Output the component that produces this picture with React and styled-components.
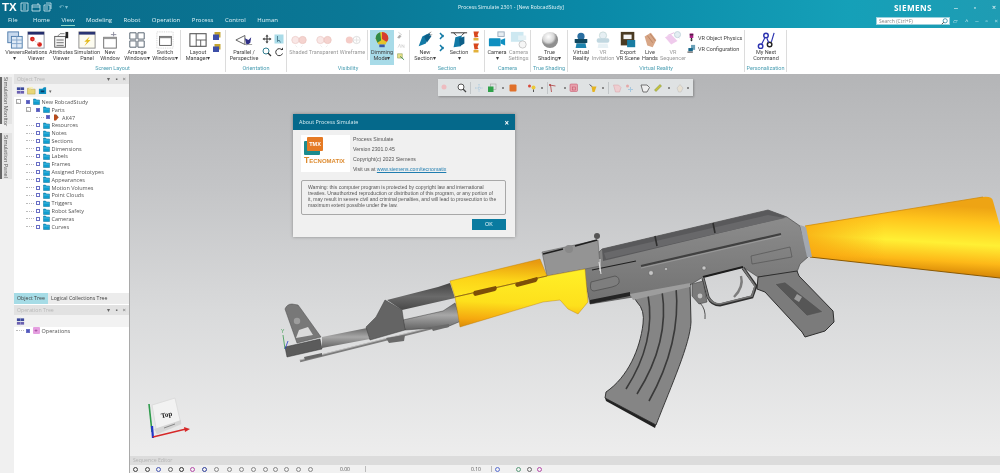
import React from "react";
import styled, { createGlobalStyle } from "styled-components";

const GlobalStyle = createGlobalStyle`
  html, body { margin: 0; padding: 0; background: #fff; }
  body { font-family: "Open Sans", "Liberation Sans", sans-serif; }
`;

const TABS = ["File", "Home", "View", "Modeling", "Robot", "Operation", "Process", "Control", "Human"];

const TREE = ["Resources", "Notes", "Sections", "Dimensions", "Labels", "Frames", "Assigned Prototypes", "Appearances", "Motion Volumes", "Point Clouds", "Triggers", "Robot Safety", "Cameras", "Curves"];

// little pictures used by the ribbon, all on a 20x20 grid
const glyphs = {
  viewers: <><rect x="2" y="1" width="12" height="12" fill="#c7d9ee" stroke="#4a78a8" /><rect x="6" y="6" width="12" height="13" fill="#dfeaf6" stroke="#4a78a8" /><path d="M6 10h12M6 14h12M12 6v13" stroke="#7fa3c8" /></>,
  relations: <><rect x="1" y="1" width="18" height="18" fill="#fff" stroke="#8b8f9c" /><rect x="1" y="1" width="18" height="3" fill="#232c6b" /><circle cx="6" cy="9" r="2.6" fill="#d9251d" /><circle cx="14" cy="15" r="2.6" fill="#d9251d" /><path d="M6 9l8 6" stroke="#d9a0a0" strokeDasharray="1 1" /></>,
  attributes: <><rect x="3" y="6" width="12" height="12" fill="#f4f4f4" stroke="#555" /><path d="M5 10h8M5 13h8M5 16h8" stroke="#666" /><path d="M6 6l3-3h5" fill="none" stroke="#777" /><rect x="15" y="1" width="3" height="7" fill="#222" /></>,
  simulation: <><rect x="1" y="1" width="18" height="18" fill="#fdfcf0" stroke="#888" /><rect x="1" y="1" width="18" height="3" fill="#2b3573" /><path d="M13 6l-6 6h3l-3 5 7-7h-3z" fill="#e4bb1e" /></>,
  newWindow: <><rect x="3" y="7" width="14" height="12" fill="#fff" stroke="#666" /><rect x="3" y="7" width="14" height="2" fill="#999" /><path d="M14 1v5M11 4h6" stroke="#889" /></>,
  arrange: <><path d="M2 2h7v7H2zM11 2h7v7h-7zM2 11h7v7H2zM11 11h7v7h-7z" fill="#fff" stroke="#5a6672" strokeWidth="1.1" /></>,
  switchWin: <><rect x="1" y="1" width="18" height="18" fill="none" stroke="#ccc" strokeDasharray="1 1" /><rect x="4" y="6" width="13" height="10" fill="#fff" stroke="#555" /><rect x="4" y="6" width="13" height="2" fill="#888" /></>,
  layout: <><rect x="1" y="3" width="18" height="14" fill="#fff" stroke="#555" strokeWidth="1.2" /><path d="M8 3v14M8 10h11M13 10v7" stroke="#555" /></>,
  parallel: <><path d="M1 10l10-5v10z" fill="#fff" stroke="#555" /><path d="M11 8l4 2 3-3-1 6-4 3z" fill="#2f2f86" /><path d="M11 15l8 0" stroke="#999" /></>,
  ball: <><circle cx="6" cy="10" r="4" fill="#f5d5d2" stroke="#e0a9a4" /><circle cx="14" cy="10" r="4" fill="#eeb0a8" stroke="#dc9a90" /><path d="M6 16l2 2M14 16l-2 2" stroke="#ddd" /></>,
  wire: <><circle cx="6" cy="10" r="4" fill="#eda49b" /><circle cx="14" cy="10" r="4" fill="#fff" stroke="#bbb" /><path d="M11 10h6M14 7v6" stroke="#ccc" /></>,
  dimming: <><path d="M10 1a7 7 0 0 1 7 7c0 3-2 4-3 7H6c-1-3-3-4-3-7a7 7 0 0 1 7-7z" fill="#e5c42a" /><path d="M10 1a7 7 0 0 1 7 7c0 2-1 3-2 4l-5-3z" fill="#d63c31" /><path d="M3 8a7 7 0 0 1 5-6.7l1 9L5 13z" fill="#2f8a46" /><rect x="7" y="15" width="6" height="3" fill="#3857a8" /></>,
  section: <><path d="M3 17l4-11 6-3-2 11z" fill="#127aa6" /><path d="M9 6l6-4 2 4-5 7z" fill="#0d5f88" /><path d="M14 3l3-2M15 5l3-1" stroke="#999" /></>,
  sectionB: <><path d="M4 18l2-11 7-2-1 12z" fill="#127aa6" /><path d="M10 8l6-2 0 8-5 3z" fill="#0d5f88" /><path d="M1 2h18M4 2l3 3M16 2l-3 3" stroke="#222" /></>,
  camera: <><rect x="1" y="8" width="13" height="9" rx="1" fill="#0f8fc0" /><path d="M14 10l5-2v8l-5-2z" fill="#0f8fc0" /><rect x="11" y="1" width="7" height="5" fill="#e8eef2" stroke="#9ab" /></>,
  cameraSet: <><rect x="1" y="1" width="14" height="11" fill="#a5d6e6" /><rect x="9" y="5" width="9" height="5" fill="#cfe6ee" /><circle cx="14" cy="15" r="4" fill="#f0f0f0" stroke="#999" /></>,
  sphere: <><defs><radialGradient id="sph" cx="40%" cy="30%"><stop offset="0" stopColor="#fff" /><stop offset="0.7" stopColor="#d6d6d6" /><stop offset="1" stopColor="#8f8f8f" /></radialGradient></defs><circle cx="10" cy="10" r="9" fill="url(#sph)" /></>,
  vr: <><circle cx="10" cy="6" r="4" fill="#2a6ea0" /><path d="M3 9h14v4l-3 1H6l-3-1z" fill="#10475f" /><path d="M5 14h10l1 5H4z" fill="#1c83ad" /></>,
  vrInvite: <><circle cx="10" cy="5" r="4" fill="#d3e3ea" stroke="#9bb" /><rect x="3" y="8" width="14" height="5" rx="2" fill="#8fb8c8" /><path d="M5 14h10l1 5H4z" fill="#d5e6ee" /></>,
  exportVr: <><rect x="2" y="1" width="15" height="15" fill="#4a3a22" /><rect x="5" y="4" width="9" height="5" fill="#f3f3f3" /><rect x="9" y="10" width="9" height="8" fill="#1a7da2" /></>,
  hands: <><path d="M4 6l7-4 6 8-4 8-6-2z" fill="#d8a686" /><path d="M7 5l6 8M10 3l6 8" stroke="#b98463" fill="none" /></>,
  sequencer: <><path d="M1 7l7-3 7 7-7 4z" fill="#e3a0dd" /><path d="M4 5l7-3 6 6" stroke="#cf7ec7" fill="none" /><circle cx="15" cy="4" r="3.4" fill="#cfe0e8" stroke="#8fb1c0" /></>,
  next: <><circle cx="4" cy="17" r="2.5" fill="none" stroke="#2c33b0" strokeWidth="1.6" /><circle cx="10" cy="5" r="2.5" fill="none" stroke="#2c33b0" strokeWidth="1.6" /><circle cx="14" cy="15" r="2.5" fill="none" stroke="#222" strokeWidth="1.6" /><path d="M5 15l4-8M11 8l2 5M16 12l3-10" stroke="#2c33b0" strokeWidth="1.3" fill="none" /></>,
  cubeBlue: <><rect x="5" y="2" width="12" height="11" fill="#c4a532" /><rect x="2" y="7" width="12" height="11" fill="#3d4fa8" /></>,
  move: <><path d="M10 1l3 4h-2v4h4V7l4 3-4 3v-2h-4v4h2l-3 4-3-4h2v-4H5v2l-4-3 4-3v2h4V5H7z" fill="#333" /></>,
  pick: <><rect x="1" y="1" width="18" height="18" fill="#a9dbe8" /><path d="M7 4v11l3-3 3 5" fill="none" stroke="#2c5b70" strokeWidth="1.4" /></>,
  zoom: <><circle cx="8" cy="8" r="6" fill="none" stroke="#2f7d90" strokeWidth="2" /><path d="M12 12l6 6" stroke="#333" strokeWidth="2.4" /></>,
  rotate: <><path d="M16 6a7 7 0 1 0 1 7" fill="none" stroke="#333" strokeWidth="2" /><path d="M13 6h5V1z" fill="#333" /></>,
  pen: <><path d="M4 3l8 6M2 15l5-6 3 3-4 5z" fill="#aaa" stroke="#999" /></>,
  text: <><path d="M3 13l4-8 2 8M12 13V6l5 7V6" fill="none" stroke="#b5b5b5" /></>,
  mini: <><path d="M2 4h11v10H2z" fill="#e8e08c" stroke="#6f8a36" /><path d="M8 10l9 8" stroke="#3c8a52" strokeWidth="2" /></>,
  stackSmall: <><path d="M4 4l7 8M4 16l7-8" stroke="#127aa6" strokeWidth="3" /></>,
  flag: <><path d="M5 1h11l-3 7 2 4-8 1z" fill="#d8471d" /><path d="M5 14h10v5H5z" fill="#e3b13a" /></>,
  physics: <><rect x="6" y="1" width="8" height="10" fill="#ab1f87" /><rect x="6" y="3" width="8" height="2" fill="#222" /><path d="M10 11v4" stroke="#222" strokeWidth="3" /><path d="M7 15h6l-3 4z" fill="#222" /></>,
  config: <><rect x="9" y="2" width="9" height="11" fill="#6ba1b8" /><rect x="3" y="9" width="10" height="7" fill="#18678b" /><path d="M1 18h12" stroke="#222" strokeWidth="2" /></>,
  treeTool: <><rect x="2" y="3" width="16" height="6" fill="#3d4a9c" /><rect x="2" y="11" width="16" height="6" fill="#6a5fb0" /><path d="M10 1v18" stroke="#c5cbe8" /></>,
  folderOpen: <><path d="M1 5h7l2 2h8v11H1z" fill="#e8d678" stroke="#a99a3a" /><path d="M4 2h9v4H4z" fill="#f7f0b8" /></>,
  boxTool: <><path d="M2 6h8l3-3h5v15H2z" fill="#0f8fc0" /><path d="M6 10h8v4H6z" fill="#083f66" /></>,
};

const Icon = ({ name, size = 18 }) => (
  <svg width={size} height={size} viewBox="0 0 20 20">{glyphs[name]}</svg>
);

const RIBBON = [
  { title: "Screen Layout", width: 226, pad: 4, items: [
    { icon: "viewers", label: "Viewers\n▾", w: 22 },
    { icon: "relations", label: "Relations\nViewer", w: 20 },
    { icon: "attributes", label: "Attributes\nViewer", w: 30 },
    { icon: "simulation", label: "Simulation\nPanel", w: 22 },
    { icon: "newWindow", label: "New\nWindow", w: 20, ml: 2 },
    { icon: "arrange", label: "Arrange\nWindows▾", w: 22, ml: 6 },
    { icon: "switchWin", label: "Switch\nWindows▾", w: 26, ml: 4 },
    { divider: true, ml: 2 },
    { icon: "layout", label: "Layout\nManager▾", w: 26, ml: 4 },
    { stack: ["cubeBlue", "cubeBlue"], w: 12 },
  ] },
  { title: "Orientation", width: 61, items: [
    { icon: "parallel", label: "Parallel /\nPerspective", w: 36 },
    { grid: ["move", "pick", "zoom", "rotate"], w: 24 },
  ] },
  { title: "Visibility", width: 123, items: [
    { icon: "ball", label: "Shaded", w: 23, muted: true },
    { icon: "ball", label: "Transparent", w: 27, muted: true },
    { icon: "wire", label: "Wireframe", w: 29, ml: 1, muted: true },
    { divider: true },
    { icon: "dimming", label: "Dimming\nMode▾", w: 24, ml: 2, active: true },
    { stack: ["pen", "text", "mini"], w: 12, ml: 1 },
  ] },
  { title: "Section", width: 75, pad: 2, items: [
    { icon: "section", label: "New\nSection▾", w: 26 },
    { stack: ["stackSmall", "stackSmall"], w: 10 },
    { icon: "sectionB", label: "Section\n▾", w: 22 },
    { stack: ["flag", "flag"], w: 12 },
  ] },
  { title: "Camera", width: 46, pad: 1, items: [
    { icon: "camera", label: "Camera\n▾", w: 22 },
    { icon: "cameraSet", label: "Camera\nSettings", w: 21, muted: true },
  ] },
  { title: "True Shading", width: 37, items: [
    { icon: "sphere", label: "True\nShading▾", w: 37 },
  ] },
  { title: "Virtual Reality", width: 177, pad: 2, items: [
    { icon: "vr", label: "Virtual\nReality", w: 22 },
    { icon: "vrInvite", label: "VR\nInvitation", w: 22, muted: true },
    { icon: "exportVr", label: "Export\nVR Scene", w: 24, ml: 2 },
    { icon: "hands", label: "Live\nHands", w: 18, ml: 1 },
    { icon: "sequencer", label: "VR\nSequencer", w: 26, ml: 1, muted: true },
    { list: [["physics", "VR Object Physics"], ["config", "VR Configuration"]], ml: 1 },
  ] },
  { title: "Personalization", width: 42, items: [
    { icon: "next", label: "My Next\nCommand", w: 42 },
  ] },
];

// x is the centre of the item on the page
const TOOLS = [
  { x: 445, shape: <circle cx="8" cy="8" r="5" fill="#eebcc0" /> },
  { x: 462, shape: <><circle cx="8" cy="8" r="6" fill="#fff" stroke="#555" strokeWidth="2" /><path d="M12 12l6 6" stroke="#444" strokeWidth="2.5" /></> },
  { x: 470, kind: "sep" },
  { x: 479, shape: <path d="M10 2v16M2 10h16" stroke="#a8c8de" strokeWidth="2" strokeDasharray="3 2" /> },
  { x: 492, shape: <><rect x="7" y="2" width="11" height="11" fill="none" stroke="#999" /><rect x="2" y="7" width="11" height="11" fill="#2fa24a" /></> },
  { x: 503, kind: "dot" },
  { x: 513, shape: <rect x="3" y="3" width="14" height="14" rx="2" fill="#e0702a" /> },
  { x: 532, shape: <><circle cx="5" cy="6" r="3" fill="#d8483a" /><circle cx="13" cy="9" r="4" fill="#ecc93a" /><path d="M13 13v5" stroke="#555" strokeWidth="2" /></> },
  { x: 542, kind: "dot" },
  { x: 547, kind: "sep" },
  { x: 553, shape: <><path d="M3 4l12 2M5 4l2 14" stroke="#b04040" strokeWidth="1.6" /><circle cx="4" cy="4" r="2" fill="#b04040" /></> },
  { x: 565, kind: "dot" },
  { x: 574, shape: <><rect x="2" y="2" width="15" height="15" rx="2" fill="#e7a0ac" stroke="#c04b61" /><rect x="7" y="8" width="6" height="6" fill="none" stroke="#c04b61" /></> },
  { x: 593, shape: <><path d="M3 3l6 5" stroke="#556" strokeWidth="2" /><path d="M7 7h10l-4 11H9z" fill="#e6b420" /></> },
  { x: 603, kind: "dot" },
  { x: 608, kind: "sep" },
  { x: 617, shape: <path d="M3 4h10l5 5-3 9H7z" fill="#eecdd0" stroke="#d8a0a6" /> },
  { x: 630, shape: <><circle cx="5" cy="6" r="3" fill="#e5a8a8" /><path d="M11 8v10M6 13h10" stroke="#a8c8de" strokeWidth="2" /></> },
  { x: 645, shape: <path d="M2 4h12l5 5-5 9H6z" fill="#eee" stroke="#555" strokeWidth="1.6" /> },
  { x: 658, shape: <path d="M3 14L14 3l3 3L6 17z" fill="#c9c23a" stroke="#6f8a36" /> },
  { x: 669, kind: "dot" },
  { x: 680, shape: <path d="M4 10l6-7 6 7-4 8H7z" fill="#e7e0d2" stroke="#bbb" /> },
  { x: 688, kind: "dot" },
];

const SEQ_TOOLS = [
  [135, "#444"], [147, "#444"], [158, "#4757b0"], [170, "#666"], [181, "#333"], [192, "#b44ca8"], [204, "#2f3f9a"],
  [216, "#888"], [229, "#888"], [241, "#888"], [253, "#888"], [265, "#888"], [275, "#888"], [286, "#888"], [298, "#888"], [310, "#888"],
];

const SEQ_TAIL = [["#5a6fd0", 3], ["#5a9a7a", 16], ["#666", 6], ["#b44ca8", 5]];

const toolWidth = (t) => (t.kind === "sep" ? 1 : t.kind === "dot" ? 2 : 10);

function FloatTools() {
  let right = 438;
  return TOOLS.map((t) => {
    const w = toolWidth(t);
    const dx = t.x - w / 2 - right;
    right = t.x + w / 2;
    if (t.kind === "sep") return <FloatSep key={t.x} $dx={dx} />;
    if (t.kind === "dot") return <FloatDot key={t.x} $dx={dx} />;
    return (
      <FloatSlot key={t.x} $dx={dx}>
        <svg width="10" height="10" viewBox="0 0 20 20">{t.shape}</svg>
      </FloatSlot>
    );
  });
}

function RibbonGroup({ group }) {
  return (
    <Group $w={group.width}>
      <GroupBody $pad={group.pad}>
        {group.items.map((it, i) => {
          if (it.divider) return <GroupDivider key={i} $ml={it.ml} />;
          if (it.stack)
            return (
              <SmallStack key={i} $w={it.w} $ml={it.ml}>
                {it.stack.map((n, j) => <Icon key={j} name={n} size={10} />)}
              </SmallStack>
            );
          if (it.grid)
            return (
              <SmallGrid key={i} $w={it.w}>
                {it.grid.map((n, j) => <Icon key={j} name={n} size={10} />)}
              </SmallGrid>
            );
          if (it.list)
            return (
              <SmallList key={i} $ml={it.ml}>
                {it.list.map(([n, t]) => (
                  <SmallRow key={t}><Icon name={n} size={9} />{t}</SmallRow>
                ))}
              </SmallList>
            );
          return (
            <BigButton key={i} $w={it.w} $ml={it.ml} $active={it.active} $muted={it.muted}>
              <Icon name={it.icon} />
              <BigLabel>{it.label}</BigLabel>
            </BigButton>
          );
        })}
      </GroupBody>
      <GroupTitle>{group.title}</GroupTitle>
    </Group>
  );
}

const Folder = () => (
  <svg width="7" height="7" viewBox="0 0 14 14">
    <path d="M1 2h4l2 2h6v9H1z" fill="#0f9fd0" stroke="#0a6f94" />
    <path d="M1 6h12" stroke="#7fd2ec" />
  </svg>
);

const PartMark = () => (
  <svg width="7" height="7" viewBox="0 0 14 14"><path d="M2 1h4l5 6-5 6H2z" fill="#b84b1c" /><path d="M6 1l5 6" stroke="#5a2a10" /></svg>
);

function TreeRow({ indent, expander, filled, icon, label }) {
  return (
    <Row $indent={indent}>
      {expander ? <Expander>-</Expander> : <Stub />}
      <Check $filled={filled} />
      {icon}
      <span>{label}</span>
    </Row>
  );
}

function PanelHead({ title }) {
  return (
    <PanelTitle>
      <span>{title}</span>
      <PanelButtons><span>▾</span><span>▪</span><span>×</span></PanelButtons>
    </PanelTitle>
  );
}

function Rifle() {
  return (
    <RifleSvg viewBox="130 75 870 381" width="870" height="381">
      <defs>
        <linearGradient id="stock" gradientUnits="userSpaceOnUse" x1="906" y1="204" x2="902" y2="272">
          <stop offset="0" stopColor="#eea414" />
          <stop offset="0.22" stopColor="#ffc41c" />
          <stop offset="0.55" stopColor="#fff034" />
          <stop offset="0.82" stopColor="#fdb818" />
          <stop offset="1" stopColor="#d98a08" />
        </linearGradient>
        <linearGradient id="stockFade" gradientUnits="userSpaceOnUse" x1="805" y1="0" x2="885" y2="0">
          <stop offset="0" stopColor="#f7a30e" stopOpacity="0.75" />
          <stop offset="1" stopColor="#f7a30e" stopOpacity="0" />
        </linearGradient>
        <linearGradient id="guardTop" x1="0.1" y1="0" x2="0" y2="1">
          <stop offset="0" stopColor="#e89a10" />
          <stop offset="0.5" stopColor="#fcd418" />
          <stop offset="1" stopColor="#ffe820" />
        </linearGradient>
        <linearGradient id="guardLow" x1="0.1" y1="0" x2="0" y2="1">
          <stop offset="0" stopColor="#ffee26" />
          <stop offset="0.55" stopColor="#fde01c" />
          <stop offset="0.85" stopColor="#f5a80f" />
          <stop offset="1" stopColor="#d88a08" />
        </linearGradient>
        <linearGradient id="metal" x1="0" y1="0" x2="0" y2="1">
          <stop offset="0" stopColor="#8e8e8e" />
          <stop offset="0.5" stopColor="#808080" />
          <stop offset="1" stopColor="#727272" />
        </linearGradient>
        <linearGradient id="tube" x1="0" y1="0" x2="0" y2="1">
          <stop offset="0" stopColor="#444" />
          <stop offset="0.5" stopColor="#6a6a6a" />
          <stop offset="1" stopColor="#484848" />
        </linearGradient>
        <linearGradient id="barrel" x1="0" y1="0" x2="0" y2="1">
          <stop offset="0" stopColor="#6a6a6a" />
          <stop offset="0.45" stopColor="#a8a8a8" />
          <stop offset="1" stopColor="#626262" />
        </linearGradient>
      </defs>

      {/* cleaning rod */}
      <path d="M300 362L452 324" stroke="#7c7c7c" strokeWidth="2.4" />
      <path d="M300 361L452 323" stroke="#d6d6d6" strokeWidth="0.7" />

      {/* barrel, gas tube */}
      <path d="M322 338L367 329L370 340L322 349Z" fill="url(#barrel)" />
      <path d="M403 321L443 312L455 304L461 322L447 328L405 331Z" fill="url(#barrel)" stroke="#3c3c3c" strokeWidth="0.5" />
      <path d="M387 301L438 288L450 284L455 299L402 311Z" fill="url(#tube)" />
      <path d="M366 328L376 318L385 301L402 311L405 331L370 341Z" fill="#646464" stroke="#3d3d3d" strokeWidth="0.5" />
      <path d="M386 339L405 336L404 342L389 344Z" fill="#6a6a6a" />
      <path d="M431 328L449 325L449 328L433 332Z" fill="#6a6a6a" />

      {/* front sight and muzzle */}
      <path d="M285 310Q287 305 292 305L298 306L301 310L321 338L297 344Z" fill="#787878" stroke="#4a4a4a" strokeWidth="0.5" />
      <path d="M296 339L299 331L308 328L313 336Z" fill="#dadada" />
      <circle cx="297" cy="322" r="3.2" fill="#9d9d9d" />
      <path d="M285 348L320 340L322 350L287 358Z" fill="#5b5b5b" stroke="#333" strokeWidth="0.5" />
      <path d="M304 358L322 354L322 357L305 361Z" fill="#666" />

      {/* receiver body */}
      <path d="M583 270L602 250L768 211L787 218L800 227L805 243L808 258L800 265L797 273L758 278L743 268L703 278L690 286L633 298L590 305Z" fill="url(#metal)" stroke="#3c3c3c" strokeWidth="0.6" />
      <path d="M602 250L768 211L787 218L603 262Z" fill="#59595b" />
      <path d="M604 254L768 216L785 219L606 260Z" fill="#68686a" />
      <path d="M655 237L657 247M713 224L715 234" stroke="#2e2e2e" strokeWidth="1.6" />
      <path d="M641 267L781 235" stroke="#404040" strokeWidth="2.2" />
      <path d="M641 269L781 237" stroke="#aaa" strokeWidth="0.6" />
      <path d="M590 305L630 297L630 293L590 301Z" fill="#242424" />
      <path d="M591 283L615 277Q620 278 619 284Q617 287 612 288L594 292Q589 292 591 283Z" fill="#7e7e7e" stroke="#595959" />
      <path d="M592 271L636 262" stroke="#1f1f1f" strokeWidth="1.2" />
      <path d="M751 257L790 248L792 258L752 265Z" fill="none" stroke="#4e4e4e" strokeWidth="0.6" />
      <circle cx="651" cy="274" r="2.4" fill="#c6c6c6" stroke="#555" strokeWidth="0.5" />
      <circle cx="666" cy="270" r="1.6" fill="#bbb" stroke="#555" strokeWidth="0.4" />
      <circle cx="704" cy="269" r="2" fill="#c6c6c6" stroke="#555" strokeWidth="0.4" />
      <path d="M703 278L743 268" stroke="#1d1d1d" strokeWidth="2.2" />

      {/* trigger guard and trigger */}
      <path d="M703 279L708 298Q712 306 720 306L752 298L756 287L743 269" fill="none" stroke="#2f2f2f" strokeWidth="3" />
      <path d="M703 279L708 298Q712 305 720 305L752 297L755 287L743 269" fill="none" stroke="#757575" strokeWidth="1.6" />
      <path d="M741 277Q744 288 734 298" fill="none" stroke="#7d7d7d" strokeWidth="2.4" />

      {/* pistol grip */}
      <path d="M758 278L797 272L799 277L833 312L834 323L825 332L805 338L802 333L765 293L757 290Z" fill="#7b7b7b" stroke="#2e2e2e" strokeWidth="1" />
      <path d="M775 285L785 283L823 313L807 317Z" fill="#565656" stroke="#8a8a8a" strokeWidth="0.5" />
      <path d="M797 295L802 298L799 303L794 300Z" fill="#9a9a9a" />

      {/* magazine catch */}
      <path d="M692 285L703 282L707 303L699 305L692 297Z" fill="#7a7a7a" stroke="#333" strokeWidth="0.5" />
      <circle cx="700" cy="297" r="2.4" fill="#c2c2c2" />
      <path d="M700 304Q706 310 705 320" fill="none" stroke="#444" strokeWidth="0.9" />

      {/* magazine */}
      <path d="M633 297L690 285L691 323C690 345 672 385 656 426L605 399L606 393C628 378 640 350 643 325Q645 311 637 303Z" fill="#858585" stroke="#2a2a2a" strokeWidth="0.9" />
      <path d="M605 399L656 426L655 429L606 402Z" fill="#222" />
      <path d="M648 296C654 330 644 362 626 390" fill="none" stroke="#3a3a3a" strokeWidth="1.6" />
      <path d="M662 292C668 330 656 365 637 395" fill="none" stroke="#3a3a3a" strokeWidth="1.6" />
      <path d="M676 288C680 330 668 368 649 402" fill="none" stroke="#3a3a3a" strokeWidth="1.6" />
      <path d="M630 295L690 284L690 288L633 301Z" fill="#9d9d9d" />

      {/* rear sight */}
      <path d="M542 253L598 241L600 267L585 270L547 277Z" fill="#949494" stroke="#555" strokeWidth="0.5" />
      <path d="M543 255L563 250M575 247L597 241" stroke="#1f1f1f" strokeWidth="1.8" />
      <circle cx="569" cy="250" r="4" fill="#888" />
      <circle cx="597" cy="237" r="3" fill="#555" />
      <path d="M600 260L600 272M599 263L601 275" stroke="#e5e5e5" strokeWidth="1" />

      {/* handguard */}
      <path d="M450 282L540 260L547 277L455 298Z" fill="url(#guardTop)" stroke="#b77808" strokeWidth="0.4" />
      <path d="M455 298L547 277L585 270L588 303L578 315L568 310L560 301L543 303L460 328Z" fill="url(#guardLow)" stroke="#b77808" strokeWidth="0.4" />
      <path d="M455 298L547 277" stroke="#7a5510" strokeWidth="0.7" />
      <path d="M474 292L496 287Q498 290 495 292L475 297Q472 295 474 292Z" fill="#7d4e08" />
      <path d="M516 284L537 278Q539 280 536 283L517 288Q514 286 516 284Z" fill="#7d4e08" />

      {/* stock */}
      <path d="M805 227L860 218L983 198Q992 197 993 202L1000 227L1000 279L810 258Z" fill="url(#stock)" />
      <path d="M805 227L860 218L983 198Q992 197 993 202L1000 227L1000 279L810 258Z" fill="url(#stockFade)" />
      <path d="M805 227L860 218L983 198" fill="none" stroke="#d08a0a" strokeWidth="0.8" />
      <path d="M810 258L1000 279" fill="none" stroke="#8a5a05" strokeWidth="1" />
      <path d="M800 226L806 228L812 258L807 258Z" fill="#a3a8b0" />
    </RifleSvg>
  );
}

function ViewCube() {
  return (
    <CubeSvg viewBox="0 0 50 48" width="50" height="48">
      <path d="M12 9L35 2L41 28L17 38Z" fill="#f2f2f2" stroke="#ddd" />
      <path d="M14 33L41 24L41 28L17 38Z" fill="#d5d5d5" />
      <path d="M24 32L35 28" stroke="#888" strokeWidth="1" />
      <path d="M12 36L9 8" stroke="#2e9b4c" strokeWidth="1.6" />
      <path d="M13 42L12 30" stroke="#2436c8" strokeWidth="2.2" />
      <path d="M13 41L46 33" stroke="#d62828" strokeWidth="1.4" />
      <path d="M50 33L44 31L45 36Z" fill="#d62828" />
      <CubeFace x="27" y="21" textAnchor="middle" transform="rotate(-12 27 21)">Top</CubeFace>
    </CubeSvg>
  );
}

export default function App() {
  return (
    <Page>
      <GlobalStyle />
      <Header>
        <TitleRow>
          <Brand>
            <Tx>TX</Tx>
            <QatIcons>
              <svg width="32" height="10" viewBox="0 0 32 10" fill="none" stroke="#d7eef4" strokeWidth="0.8">
                <path d="M1 1h7v8H1zM3 3h3M3 5h3M3 7h3" />
                <path d="M12 3h8v6h-8zM12 5h8M18 1v2" />
                <path d="M24 3h6v6h-6zM26 1h5v6M25 5h3M25 7h3" />
              </svg>
              <Undo>↶ ▾</Undo>
            </QatIcons>
          </Brand>
          <WindowTitle>Process Simulate 2301 - [New RobcadStudy]</WindowTitle>
          <Corner>
            <Siemens>SIEMENS</Siemens>
            <Controls><span>‒</span><span>▫</span><span>×</span></Controls>
          </Corner>
        </TitleRow>
        <TabRow>
          <Tabs>
            {TABS.map((t) => <Tab key={t} $on={t === "View"}>{t}</Tab>)}
          </Tabs>
          <SearchBox>
            <span>Search (Ctrl+F)</span>
            <svg width="7" height="7" viewBox="0 0 10 10"><circle cx="6" cy="4" r="3" fill="none" stroke="#0c7a99" /><path d="M4 6L1 9" stroke="#444" strokeWidth="1.3" /></svg>
          </SearchBox>
          <MiniControls><span>▱</span><span>˄</span><span>‒</span><span>▫</span><span>×</span></MiniControls>
        </TabRow>
      </Header>

      <Ribbon>
        {RIBBON.map((g) => <RibbonGroup key={g.title} group={g} />)}
      </Ribbon>

      <Workspace>
        <Rail>
          <RailTab $h={47}>Simulation Monitor</RailTab>
          <RailTab $h={46}>Simulation Panel</RailTab>
        </Rail>

        <Side>
          <PanelHead title="Object Tree" />
          <PanelTools>
            <Icon name="treeTool" size={9} />
            <Icon name="folderOpen" size={9} />
            <Icon name="boxTool" size={9} />
            <small>▾</small>
          </PanelTools>
          <Tree>
            <TreeRow indent={1.5} expander filled icon={<Folder />} label="New RobcadStudy" />
            <TreeRow indent={11.5} expander filled icon={<Folder />} label="Parts" />
            <TreeRow indent={22} filled icon={<PartMark />} label="AK47" />
            {TREE.map((t) => <TreeRow key={t} indent={11.5} icon={<Folder />} label={t} />)}
          </Tree>
          <SideTabs>
            <SideTab $on>Object Tree</SideTab>
            <SideTab>Logical Collections Tree</SideTab>
          </SideTabs>
          <PanelHead title="Operation Tree" />
          <PanelTools $tight>
            <Icon name="treeTool" size={9} />
          </PanelTools>
          <OpTree>
            <TreeRow indent={1.5} filled icon={<OpMark>+</OpMark>} label="Operations" />
          </OpTree>
        </Side>

        <ViewArea>
          <Canvas>
            <Rifle />
            <Axes viewBox="0 0 12 26" width="12" height="26">
              <text x="1" y="6" fontSize="5" fill="#3b9b4e" fontFamily="Liberation Sans">Y</text>
              <path d="M3 8L5 22" stroke="#3b9b4e" strokeWidth="0.8" />
              <path d="M5 22L8 14" stroke="#2b3ec8" strokeWidth="0.8" />
            </Axes>
            <FloatBar><FloatTools /></FloatBar>
            <ViewCube />
            <Dialog>
              <DialogHead>
                <span>About Process Simulate</span>
                <b>×</b>
              </DialogHead>
              <DialogTop>
                <Logo>
                  <TmxMark>TMX</TmxMark>
                  <TmxWord>Tecnomatix</TmxWord>
                </Logo>
                <Facts>
                  <span>Process Simulate</span>
                  <span>Version 2301.0.45</span>
                  <span>Copyright(c) 2023 Siemens</span>
                  <span>Visit us at <LinkText>www.siemens.com/tecnomatix</LinkText></span>
                </Facts>
              </DialogTop>
              <Warning>
                Warning: this computer program is protected by copyright law and international<br />
                treaties. Unauthorized reproduction or distribution of this program, or any portion of<br />
                it, may result in severe civil and criminal penalties, and will lead to prosecution to the<br />
                maximum extent possible under the law.
              </Warning>
              <DialogFoot><OkButton>OK</OkButton></DialogFoot>
            </Dialog>
          </Canvas>
          <SeqTitle>Sequence Editor</SeqTitle>
          <SeqTools>
            {SEQ_TOOLS.map(([x, c], i) => (
              <SeqDot key={i} $c={c} $dx={i === 0 ? 3 : x - SEQ_TOOLS[i - 1][0] - 5} />
            ))}
            <SeqField $w={40} $ml={12}>0.00</SeqField>
            <SeqField $w={30} $ml={95}>0.10</SeqField>
            {SEQ_TAIL.map(([c, dx], i) => <SeqDot key={i} $c={c} $dx={dx} />)}
          </SeqTools>
        </ViewArea>
      </Workspace>
    </Page>
  );
}

const Page = styled.div`
  width: 1000px;
  height: 473px;
  overflow: hidden;
  display: flex;
  flex-direction: column;
  background: #fff;
  filter: blur(0.3px);
`;

const Header = styled.header`
  height: 28px;
  flex: none;
  background: linear-gradient(90deg, #096a89 0%, #0a7896 35%, #0a8aa8 60%, #15a0b8 85%, #1f9cb3 100%);
  color: #fff;
  display: flex;
  flex-direction: column;
`;

const TitleRow = styled.div`
  height: 14px;
  display: grid;
  grid-template-columns: 458px auto 1fr;
  align-items: center;
`;

const Brand = styled.div`
  display: flex;
  align-items: center;
  padding-left: 2px;
`;

const Tx = styled.span`
  font: 700 11.5px "Liberation Sans", sans-serif;
`;

const QatIcons = styled.div`
  display: flex;
  align-items: center;
  margin-left: 3px;
`;

const Undo = styled.span`
  font-size: 6px;
  color: #7fbed0;
  margin-left: 7px;
`;

const WindowTitle = styled.div`
  font-size: 5.2px;
  color: #e6f5f8;
  white-space: nowrap;
`;

const Corner = styled.div`
  display: flex;
  align-items: center;
  justify-content: flex-end;
`;

const Siemens = styled.span`
  font: 700 8.2px "Open Sans", sans-serif;
  letter-spacing: 0.4px;
  margin-right: 22px;
`;

const Controls = styled.div`
  display: flex;
  font-size: 7px;
  width: 46px;
  justify-content: space-between;
  padding-right: 4px;
  box-sizing: border-box;
`;

const TabRow = styled.div`
  height: 14px;
  display: flex;
  align-items: center;
`;

const Tabs = styled.nav`
  display: flex;
  gap: 11.5px;
  padding-left: 8px;
  flex: 1;
`;

const Tab = styled.span`
  font-size: 6px;
  color: #dff2f6;
  padding-bottom: 1px;
  border-bottom: 1px solid ${(p) => (p.$on ? "#8fd8c8" : "transparent")};
  &:first-child { margin-right: 4px; }
`;

const SearchBox = styled.div`
  width: 74px;
  height: 8px;
  background: #fff;
  border: 0.5px solid #9ad0dc;
  display: flex;
  align-items: center;
  justify-content: space-between;
  box-sizing: border-box;
  padding: 0 1px 0 2px;
  font-size: 5px;
  color: #888;
`;

const MiniControls = styled.div`
  display: flex;
  justify-content: space-between;
  width: 50px;
  padding: 0 2px 0 3px;
  box-sizing: border-box;
  font-size: 6px;
  color: #bfe6ee;
`;

const Ribbon = styled.div`
  height: 46px;
  flex: none;
  display: flex;
  background: #fff;
  font-family: Roboto, "Liberation Sans", sans-serif;
`;

const Group = styled.section`
  width: ${(p) => p.$w}px;
  flex: none;
  box-sizing: border-box;
  border-right: 1px solid #dcdcdc;
  margin: 2px 0 2px;
  display: flex;
  flex-direction: column;
`;

const GroupBody = styled.div`
  flex: 1;
  display: flex;
  padding-left: ${(p) => p.$pad || 0}px;
  min-height: 0;
`;

const GroupTitle = styled.div`
  height: 8px;
  line-height: 8px;
  text-align: center;
  font-size: 5.5px;
  color: #4c9fb3;
  white-space: nowrap;
`;

const GroupDivider = styled.div`
  width: 1px;
  height: 30px;
  background: #dcdcdc;
  margin-left: ${(p) => p.$ml || 0}px;
`;

const BigButton = styled.div`
  width: ${(p) => p.$w}px;
  margin-left: ${(p) => p.$ml || 0}px;
  flex: none;
  display: flex;
  flex-direction: column;
  align-items: center;
  padding-top: 1px;
  background: ${(p) => (p.$active ? "#a8dbe8" : "transparent")};
  opacity: ${(p) => (p.$muted ? 0.55 : 1)};
  height: 35px;
  box-sizing: border-box;
`;

const BigLabel = styled.div`
  font-size: 5.5px;
  line-height: 5.7px;
  color: #3f3f3f;
  text-align: center;
  white-space: pre;
  margin-top: 1px;
`;

const SmallStack = styled.div`
  width: ${(p) => p.$w}px;
  margin-left: ${(p) => p.$ml || 0}px;
  flex: none;
  display: flex;
  flex-direction: column;
  align-items: center;
  gap: 2px;
  padding-top: 1px;
  height: 30px;
`;

const SmallGrid = styled.div`
  width: ${(p) => p.$w}px;
  flex: none;
  display: grid;
  grid-template-columns: 12px 12px;
  grid-auto-rows: 13px;
  padding-top: 4px;
  height: fit-content;
`;

const SmallList = styled.div`
  margin-left: ${(p) => p.$ml}px;
  display: flex;
  flex-direction: column;
  gap: 2px;
  padding-top: 3px;
`;

const SmallRow = styled.div`
  display: flex;
  align-items: center;
  gap: 2px;
  font-size: 5.5px;
  color: #444;
  white-space: nowrap;
`;

const Workspace = styled.main`
  flex: 1;
  min-height: 0;
  display: flex;
  background: #f0f0f0;
`;

const Rail = styled.aside`
  width: 14px;
  flex: none;
  background: #f0f0f0;
  display: flex;
  flex-direction: column;
  gap: 9px;
  padding-top: 3px;
`;

const RailTab = styled.div`
  writing-mode: vertical-rl;
  height: ${(p) => p.$h}px;
  width: 12px;
  box-sizing: border-box;
  background: #e4e4e4;
  border-left: 2px solid #666;
  padding-right: 2px;
  font-size: 5.5px;
  line-height: 8px;
  color: #555;
  white-space: nowrap;
  text-align: center;
`;

const Side = styled.div`
  width: 115px;
  flex: none;
  background: #fff;
  display: flex;
  flex-direction: column;
  border-right: 1px solid #a9a9a9;
`;

const PanelTitle = styled.div`
  height: 10px;
  flex: none;
  background: #e2e2e2;
  display: flex;
  align-items: center;
  justify-content: space-between;
  padding: 0 3px;
  font-size: 5.2px;
  color: #b8b8b8;
`;

const PanelButtons = styled.div`
  display: flex;
  gap: 5px;
  color: #666;
  font-size: 6px;
`;

const PanelTools = styled.div`
  height: ${(p) => (p.$tight ? 12 : 13)}px;
  flex: none;
  background: #f2f2f2;
  display: flex;
  align-items: center;
  gap: 2px;
  padding-left: 1.5px;
  small { font-size: 5px; color: #666; }
`;

const Tree = styled.div`
  flex: 1;
  padding-top: 1px;
  min-height: 0;
`;

const Row = styled.div`
  height: 7.8px;
  display: flex;
  align-items: center;
  padding-left: ${(p) => p.$indent}px;
  font-size: 5.5px;
  color: #555;
  white-space: nowrap;
  span { margin-left: 2px; }
`;

const Expander = styled.i`
  width: 5px;
  height: 5px;
  box-sizing: border-box;
  border: 0.5px solid #aaa;
  font: 4px/4px "Liberation Sans", sans-serif;
  text-align: center;
  color: #777;
  margin-right: 5px;
  flex: none;
`;

const Stub = styled.i`
  width: 8px;
  margin-right: 2px;
  border-top: 1px dotted #bbb;
  flex: none;
`;

const Check = styled.i`
  width: 4px;
  height: 4px;
  box-sizing: border-box;
  border: 0.8px solid #6a6fc5;
  background: ${(p) => (p.$filled ? "#5157bd" : "#fff")};
  margin-right: 3px;
  flex: none;
`;

const OpMark = styled.i`
  width: 7px;
  height: 7px;
  background: #e59fe0;
  border-radius: 1px;
  font: 6px/7px "Liberation Sans", sans-serif;
  text-align: center;
  color: #8a2f86;
`;

const SideTabs = styled.div`
  height: 11px;
  flex: none;
  background: #ececec;
  display: flex;
  align-items: stretch;
  margin-bottom: 1px;
`;

const SideTab = styled.div`
  font-size: 5.2px;
  line-height: 10px;
  color: #3f3f3f;
  padding: 0 3px;
  background: ${(p) => (p.$on ? "#a6dce6" : "transparent")};
`;

const OpTree = styled.div`
  height: 146px;
  flex: none;
`;

const ViewArea = styled.div`
  flex: 1;
  min-width: 0;
  display: flex;
  flex-direction: column;
`;

const Canvas = styled.div`
  flex: 1;
  min-height: 0;
  position: relative;
  overflow: hidden;
  background: linear-gradient(#b4b5b7 0%, #c4c5c7 30%, #d9dadb 62%, #ededed 100%);
`;

const RifleSvg = styled.svg`
  position: absolute;
  inset: 0;
`;

const Axes = styled.svg`
  position: absolute;
  left: 150px;
  top: 253px;
`;

const CubeSvg = styled.svg`
  position: absolute;
  left: 10px;
  top: 322px;
`;

const CubeFace = styled.text`
  font: 700 7px "Liberation Serif", serif;
  fill: #222;
`;

const FloatBar = styled.div`
  position: absolute;
  left: 308px;
  top: 5px;
  width: 255px;
  height: 17px;
  background: #dfe2e3;
  box-shadow: 1px 1px 2px rgba(0, 0, 0, 0.25);
  display: flex;
  align-items: center;
`;

const FloatSlot = styled.span`
  display: flex;
  flex: none;
  margin-left: ${(p) => p.$dx}px;
`;

const FloatSep = styled.i`
  width: 1px;
  height: 12px;
  flex: none;
  background: #c2c6c8;
  margin-left: ${(p) => p.$dx}px;
`;

const FloatDot = styled.i`
  width: 2px;
  height: 2px;
  flex: none;
  background: #8a8a8a;
  margin-left: ${(p) => p.$dx}px;
`;

const Dialog = styled.div`
  position: absolute;
  left: 163px;
  top: 40px;
  width: 222px;
  height: 123px;
  background: #f0f0f0;
  box-shadow: 0 0 3px rgba(60, 60, 60, 0.45);
  display: flex;
  flex-direction: column;
  font: 5.1px "Liberation Sans", sans-serif;
  color: #555;
`;

const DialogHead = styled.div`
  height: 16px;
  flex: none;
  background: #05698b;
  color: #d9eef3;
  display: flex;
  align-items: center;
  justify-content: space-between;
  padding: 0 6px;
  font: 5.4px "Open Sans", sans-serif;
  b { font-size: 8px; color: #fff; }
`;

const DialogTop = styled.div`
  display: flex;
  padding: 5px 0 0 8px;
  gap: 3px;
`;

const Logo = styled.div`
  width: 49px;
  height: 37px;
  background: #fff;
  display: flex;
  flex-direction: column;
  align-items: flex-start;
  padding: 2px 0 0 3px;
  box-sizing: border-box;
`;

const TmxMark = styled.div`
  width: 16px;
  height: 14px;
  margin-left: 3px;
  background: #e57a24;
  border-radius: 1px;
  box-shadow: -3px 4px 0 #1b8b8e;
  color: #fff;
  font: 700 5.5px/14px "Liberation Sans", sans-serif;
  text-align: center;
`;

const TmxWord = styled.div`
  font: 700 8.6px "Liberation Sans", sans-serif;
  font-variant: small-caps;
  color: #dd8a2e;
  margin-top: 5px;
  line-height: 8px;
`;

const Facts = styled.div`
  display: flex;
  flex-direction: column;
  gap: 4.3px;
  padding-top: 2px;
  font-size: 5.2px;
  line-height: 5.7px;
`;

const LinkText = styled.span`
  color: #1f7db0;
  text-decoration: underline;
`;

const Warning = styled.div`
  margin: 7px 9px 0 8px;
  height: 35px;
  box-sizing: border-box;
  border: 1px solid #a8a8a8;
  border-radius: 2px;
  padding: 3px 6px;
  font-size: 5.05px;
  line-height: 6.2px;
  white-space: nowrap;
`;

const DialogFoot = styled.div`
  display: flex;
  justify-content: flex-end;
  padding: 4px 9px 0 0;
`;

const OkButton = styled.div`
  width: 34px;
  height: 11px;
  background: #0a7ba0;
  color: #e8f6f9;
  font-size: 5.4px;
  line-height: 11px;
  text-align: center;
`;

const SeqTitle = styled.div`
  height: 9px;
  flex: none;
  background: #dcdcdc;
  font-size: 5.2px;
  line-height: 9px;
  color: #b5b5b5;
  padding-left: 3px;
`;

const SeqTools = styled.div`
  height: 8px;
  flex: none;
  background: #f1f1f1;
  display: flex;
  align-items: center;
`;

const SeqDot = styled.i`
  width: 5px;
  height: 5px;
  border-radius: 50%;
  flex: none;
  margin-left: ${(p) => p.$dx}px;
  border: 1px solid ${(p) => p.$c};
  box-sizing: border-box;
`;

const SeqField = styled.span`
  width: ${(p) => p.$w}px;
  margin-left: ${(p) => p.$ml}px;
  font-size: 5px;
  text-align: center;
  color: #555;
  border-right: 1px solid #bbb;
`;
